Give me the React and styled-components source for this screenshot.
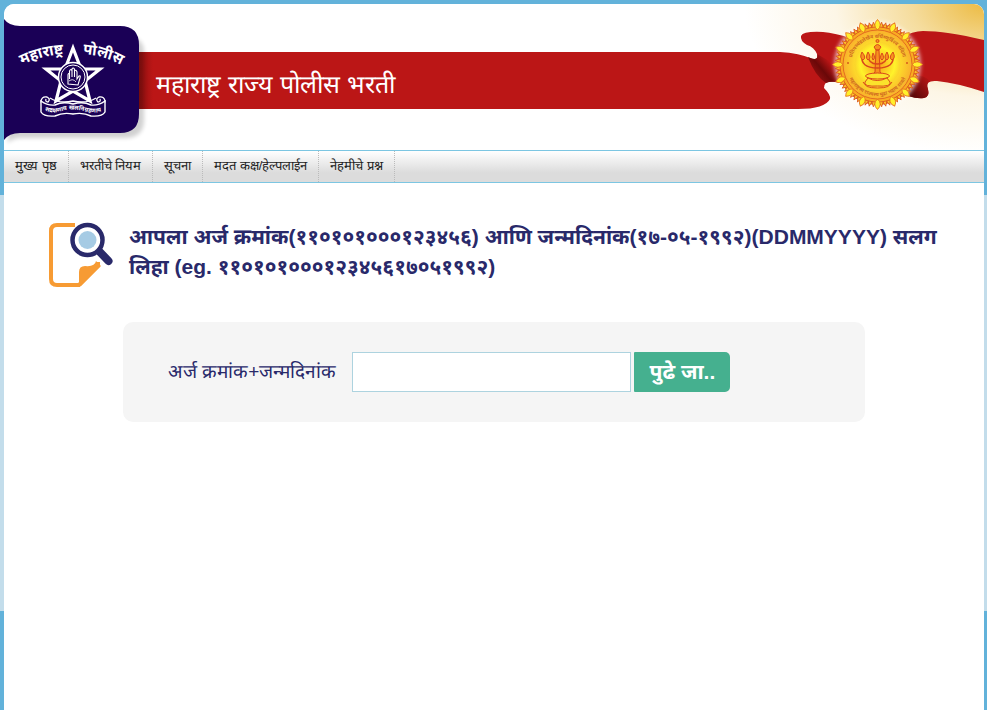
import React from "react";
import styled, { createGlobalStyle } from "styled-components";

const sans = '"Liberation Sans", "Noto Sans", sans-serif';
const light = '"Liberation Sans", serif';

const GlobalStyle = createGlobalStyle`
  * { box-sizing: border-box; }
  html { background: #62b2da; }
  body {
    margin: 0;
    font-family: ${sans};
    background: linear-gradient(#62b2da 195px, #c3ddeb 195px, #c3ddeb 611px, #62b2da 611px);
  }
`;

const Page = styled.div`
  min-height: 100vh;
  padding: 4px 3px 0 4px;
  display: flex;
`;

const Sheet = styled.div`
  flex: 1;
  min-width: 0;
  background: #fff;
  border-radius: 10px 10px 0 0;
  overflow: hidden;
`;

const Header = styled.header`
  display: flex;
  align-items: flex-start;
  background:
    radial-gradient(ellipse 240px 150px at 100% 0, #ecbb43 0, #f5dc9c 30%, #fdf6e6 62%, rgba(255, 255, 255, 0) 100%) no-repeat,
    #fff;
`;

const BadgeArt = styled.svg`
  display: block;
  flex: none;
  width: 135px;
  height: 146px;
  overflow: visible;
  z-index: 1;
`;

const Stripe = styled.div`
  flex: 1;
  min-width: 0;
  height: 57px;
  margin-top: 48px;
  padding: 0 17px;
  background: linear-gradient(90deg, #8f1010 0, #bb1616 14px);
  display: flex;
  align-items: center;
`;

const SiteTitle = styled.h1`
  margin: 0;
  padding-top: 7px;
  font: 400 25px/40px ${light};
  color: #fff;
  white-space: nowrap;
`;

const RibbonArt = styled.svg`
  display: block;
  flex: none;
  width: 204px;
  height: 146px;
`;

const Nav = styled.nav`
  height: 33px;
  display: flex;
  border: 1px solid #7cc6e2;
  border-width: 1px 0;
  background: linear-gradient(#fff 0, #dcdcdc 70%, #dcdcdc 100%);
`;

const NavLink = styled.a`
  padding: 0 11px;
  border-right: 1px dotted #bbb;
  font: 400 13px/30px ${light};
  color: #222;
  text-decoration: none;
  white-space: nowrap;
`;

const Main = styled.main`
  padding: 39px 40px 40px 45px;
`;

const Intro = styled.div`
  display: flex;
  gap: 16px;
`;

const SearchArt = styled.svg`
  flex: none;
  width: 64px;
  height: 66px;
`;

const Heading = styled.h2`
  margin: 0;
  font-size: 21px;
  line-height: 30px;
  color: #29296a;
`;

const LookupForm = styled.form`
  margin: 34px 79px 0 74px;
  padding: 30px 45px;
  display: flex;
  align-items: center;
  border-radius: 10px;
  background: #f5f5f5;
`;

const Label = styled.label`
  min-width: 168px;
  margin-right: 16px;
  font: 400 19px/40px ${light};
  color: #29296a;
  white-space: nowrap;
`;

const TextBox = styled.input`
  width: 279px;
  min-width: 0;
  height: 40px;
  margin-right: 3px;
  padding: 0 8px;
  border: 1px solid #add3df;
  border-radius: 0;
  background: #fff;
  font: 18px ${sans};
`;

const Submit = styled.button`
  width: 96px;
  height: 40px;
  padding: 0;
  border: 0;
  border-radius: 1px 5px 5px 1px;
  background: #45b08f;
  color: #fff;
  font: 700 21px/40px ${sans};
  white-space: nowrap;
`;

const RingText = styled.text`
  font: 700 ${(p) => p.$size}px ${sans};
  fill: ${(p) => p.$fill};
  text-anchor: middle;
`;

const links = ["मुख्य पृष्ठ", "भरतीचे नियम", "सूचना", "मदत कक्ष/हेल्पलाईन", "नेहमीचे प्रश्न"];

const petals = Array.from({ length: 16 }, (_, i) => (i * 360) / 16);
const rays = Array.from({ length: 64 }, (_, i) => (i * 360) / 64);

function PoliceBadge() {
  return (
    <BadgeArt viewBox="4 4 135 146" role="img" aria-label="महाराष्ट्र पोलीस">
      <defs>
        <path id="badge-left" d="M20 66Q41 55 66 54" />
        <path id="badge-right" d="M79 54Q103 54 124 67" />
        <path id="badge-motto" d="M44 110Q53 114 62 111T83 111T102 111" />
        <filter id="badge-shadow" x="-20%" y="-20%" width="140%" height="140%">
          <feGaussianBlur stdDeviation="2" />
        </filter>
      </defs>
      <path d="M8 36H123Q144 36 144 52V120Q144 138 124 138H22Q12 138 8 143Z" fill="#000" opacity="0.18" filter="url(#badge-shadow)" />
      <path d="M4 19Q9 26 20 26H120Q139 26 139 45V114Q139 133 120 133H20Q9 133 4 140Z" fill="#1a0056" />
      <g fill="none" stroke="#fff">
        <path d="M73 48L81 69H100L85 81L90 101L73 91L56 101L61 81L46 69H65Z" strokeWidth="3.2" strokeMiterlimit="10" />
        <circle cx="73" cy="77" r="14.5" fill="#1a0056" strokeWidth="1.5" />
        <circle cx="73" cy="77" r="12" strokeWidth="1" />
        <path d="M68 84V75Q68 73 69.500 74V79V71Q71 68 72 71V77V69Q73 67 74.500 69V77V71Q76 69 77 72V79L79 76Q81 75 80 78L78 85Z" strokeWidth="1.1" />
        <path d="M69 81Q73 78 76 82" strokeWidth="0.8" />
        <path d="M46 104Q41 105 41 101Q42 96 47 97Q51 99 48 102Q45 102 46 99M100 104Q105 105 105 101Q104 96 99 97Q95 99 98 102Q101 102 100 99M50 98Q59 104 73 101Q87 104 96 98" strokeWidth="1.3" />
        <path d="M41 101V112Q44 117 55 116Q63 112 73 114Q83 112 91 116Q102 117 105 112V101Q98 106 91 105Q83 101 73 104Q63 101 55 105Q48 106 41 101Z" fill="#1a0056" strokeWidth="1.4" />
      </g>
      <RingText $size={15} $fill="#fff"><textPath href="#badge-left" startOffset="50%">महाराष्ट्र</textPath></RingText>
      <RingText $size={15} $fill="#fff"><textPath href="#badge-right" startOffset="50%">पोलीस</textPath></RingText>
      <RingText $size={6} $fill="#fff"><textPath href="#badge-motto" startOffset="50%">सद्रक्षणाय खलनिग्रहणाय</textPath></RingText>
    </BadgeArt>
  );
}

function Ribbon() {
  return (
    <RibbonArt viewBox="0 4 204 146" role="img" aria-label="महाराष्ट्र शासन">
      <defs>
        <linearGradient id="fold-left" gradientUnits="userSpaceOnUse" x1="26" y1="82" x2="50" y2="62">
          <stop offset="0" stopColor="#bb1616" />
          <stop offset="0.65" stopColor="#6a0808" />
          <stop offset="1" stopColor="#bb1616" />
        </linearGradient>
        <linearGradient id="fold-right" gradientUnits="userSpaceOnUse" x1="132" y1="94" x2="150" y2="78">
          <stop offset="0" stopColor="#5c0808" />
          <stop offset="1" stopColor="#bb1616" />
        </linearGradient>
        <radialGradient id="sun">
          <stop offset="0.45" stopColor="#fff32a" />
          <stop offset="1" stopColor="#f9b02c" />
        </radialGradient>
        <radialGradient id="sun-core">
          <stop offset="0.1" stopColor="#f8a51c" />
          <stop offset="0.75" stopColor="#fff32a" />
          <stop offset="1" stopColor="#fbd22b" />
        </radialGradient>
        <filter id="glow"><feGaussianBlur stdDeviation="2" /></filter>
        <path id="ring-top" d="M71 64.500A26.500 26.500 0 0 1 124 64.500" />
        <path id="ring-bottom" d="M66 64.500A31.500 31.500 0 0 0 129 64.500" />
      </defs>
      <path d="M0 52Q19 53 33 59Q39 60 37 54Q34 47 27 45Q20 41 21 36Q23 31 43 32Q54 33 75 39V84L55 82Q44 80 44 88Q51 95 50 99Q45 109 18 109H0Z" fill="#bb1616" />
      <path d="M28 57Q39 62 37 54L58 66V82Q50 81 46 83Q35 76 28 57Z" fill="url(#fold-left)" />
      <path d="M120 38Q133 31 143 31Q166 31 204 40V92Q177 83 157 81Q146 80 147 87Q151 96 144 98Q137 99 120 94Z" fill="#bb1616" />
      <path d="M130 75Q144 74 150 81Q146 83 148 89Q150 97 144 98Q137 99 128 96Z" fill="url(#fold-right)" />
      <circle cx="97.500" cy="64.500" r="43" fill="#fff" opacity="0.75" filter="url(#glow)" />
      <circle cx="97.500" cy="64.500" r="40" fill="#f9ac21" stroke="#dd551d" strokeWidth="1" />
      {rays.map((a) => (
        <path key={a} d="M95.500 27L97.500 22L99.500 27Z" fill="#fbc42b" stroke="#d9531e" strokeWidth="0.8" transform={`rotate(${a} 97.500 64.500)`} />
      ))}
      {petals.map((a) => (
        <path key={a} d="M97.500 19.500Q103 25 97.500 30Q92 25 97.500 19.500Z" fill="#fff02c" stroke="#e87b1f" strokeWidth="0.9" transform={`rotate(${a} 97.500 64.500)`} />
      ))}
      <circle cx="97.500" cy="64.500" r="34.500" fill="url(#sun)" stroke="#e36d20" strokeWidth="1" />
      <circle cx="97.500" cy="64.500" r="23" fill="url(#sun-core)" />
      <RingText $size={5} $fill="#cf6a20"><textPath href="#ring-top" startOffset="50%">प्रतिपच्चंद्रलेखेव वर्धिष्णुर्विश्व वंदिता</textPath></RingText>
      <RingText $size={5} $fill="#cf6a20"><textPath href="#ring-bottom" startOffset="50%">महाराष्ट्रस्य राज्यस्य मुद्रा भद्राय राजते</textPath></RingText>
      <circle cx="68" cy="63" r="1" fill="#d55a1c" />
      <circle cx="127" cy="63" r="1" fill="#d55a1c" />
      <g fill="#f7931e" stroke="#d9481b" strokeWidth="1">
        <circle cx="97.500" cy="41" r="1.500" />
        <path d="M94 47Q97.500 42 101 47L99 50H96ZM96 50H99L100 72L103 75H92L95 72Z" />
        <path d="M82 55Q80 68 97.500 68Q115 68 113 55M88 55Q88 64 97.500 64Q107 64 107 55" fill="none" strokeWidth="1.500" />
        <path d="M82 52Q79 58 83 60Q87 58 82 52ZM88 52Q85 58 88 60Q92 58 88 52ZM93 53Q91 58 93 60Q96 58 93 53ZM102 53Q99 58 102 60Q105 58 102 53ZM107 52Q103 58 107 60Q110 58 107 52ZM113 52Q108 58 112 60Q116 58 113 52Z" />
        <ellipse cx="97.500" cy="76" rx="12" ry="3" fill="#fbe22c" />
        <path d="M88 78Q97 83 107 78L110 82Q112 88 97.500 88Q83 88 85 82Z" fill="#fbe22c" />
        <path d="M83 82Q85 87 97.500 86Q110 87 112 82" fill="none" />
      </g>
    </RibbonArt>
  );
}

function SearchIcon() {
  return (
    <SearchArt viewBox="49 222 64 66" aria-hidden="true">
      <path d="M75 225H57Q51 225 51 231V279Q51 285 57 285H79L98 266V262" fill="none" stroke="#f79b33" strokeWidth="4" />
      <path d="M79 285V272Q79 266 85 266Q95 267 96 261L101 266L81 286Z" fill="#f79b33" />
      <path d="M97 250L107 260" stroke="#fff" strokeWidth="12" />
      <path d="M98 250L108.500 261" stroke="#29296a" strokeWidth="8" strokeLinecap="round" />
      <circle cx="87.500" cy="240" r="15" fill="#fff" stroke="#29296a" strokeWidth="4.500" />
      <circle cx="87.500" cy="240" r="9" fill="#a6cbe4" />
    </SearchArt>
  );
}

export default function App() {
  return (
    <>
      <GlobalStyle />
      <Page>
        <Sheet>
          <Header>
            <PoliceBadge />
            <Stripe>
              <SiteTitle>महाराष्ट्र राज्य पोलीस भरती</SiteTitle>
            </Stripe>
            <Ribbon />
          </Header>
          <Nav>
            {links.map((text) => (
              <NavLink key={text} href="#">{text}</NavLink>
            ))}
          </Nav>
          <Main>
            <Intro>
              <SearchIcon />
              <Heading>
                आपला अर्ज क्रमांक(११०१०१०००१२३४५६) आणि जन्मदिनांक(१७-०५-१९९२)(DDMMYYYY) सलग लिहा (eg. ११०१०१०००१२३४५६१७०५१९९२)
              </Heading>
            </Intro>
            <LookupForm onSubmit={(e) => e.preventDefault()}>
              <Label htmlFor="application-key">अर्ज क्रमांक+जन्मदिनांक</Label>
              <TextBox id="application-key" type="text" />
              <Submit type="submit">पुढे जा..</Submit>
            </LookupForm>
          </Main>
        </Sheet>
      </Page>
    </>
  );
}
